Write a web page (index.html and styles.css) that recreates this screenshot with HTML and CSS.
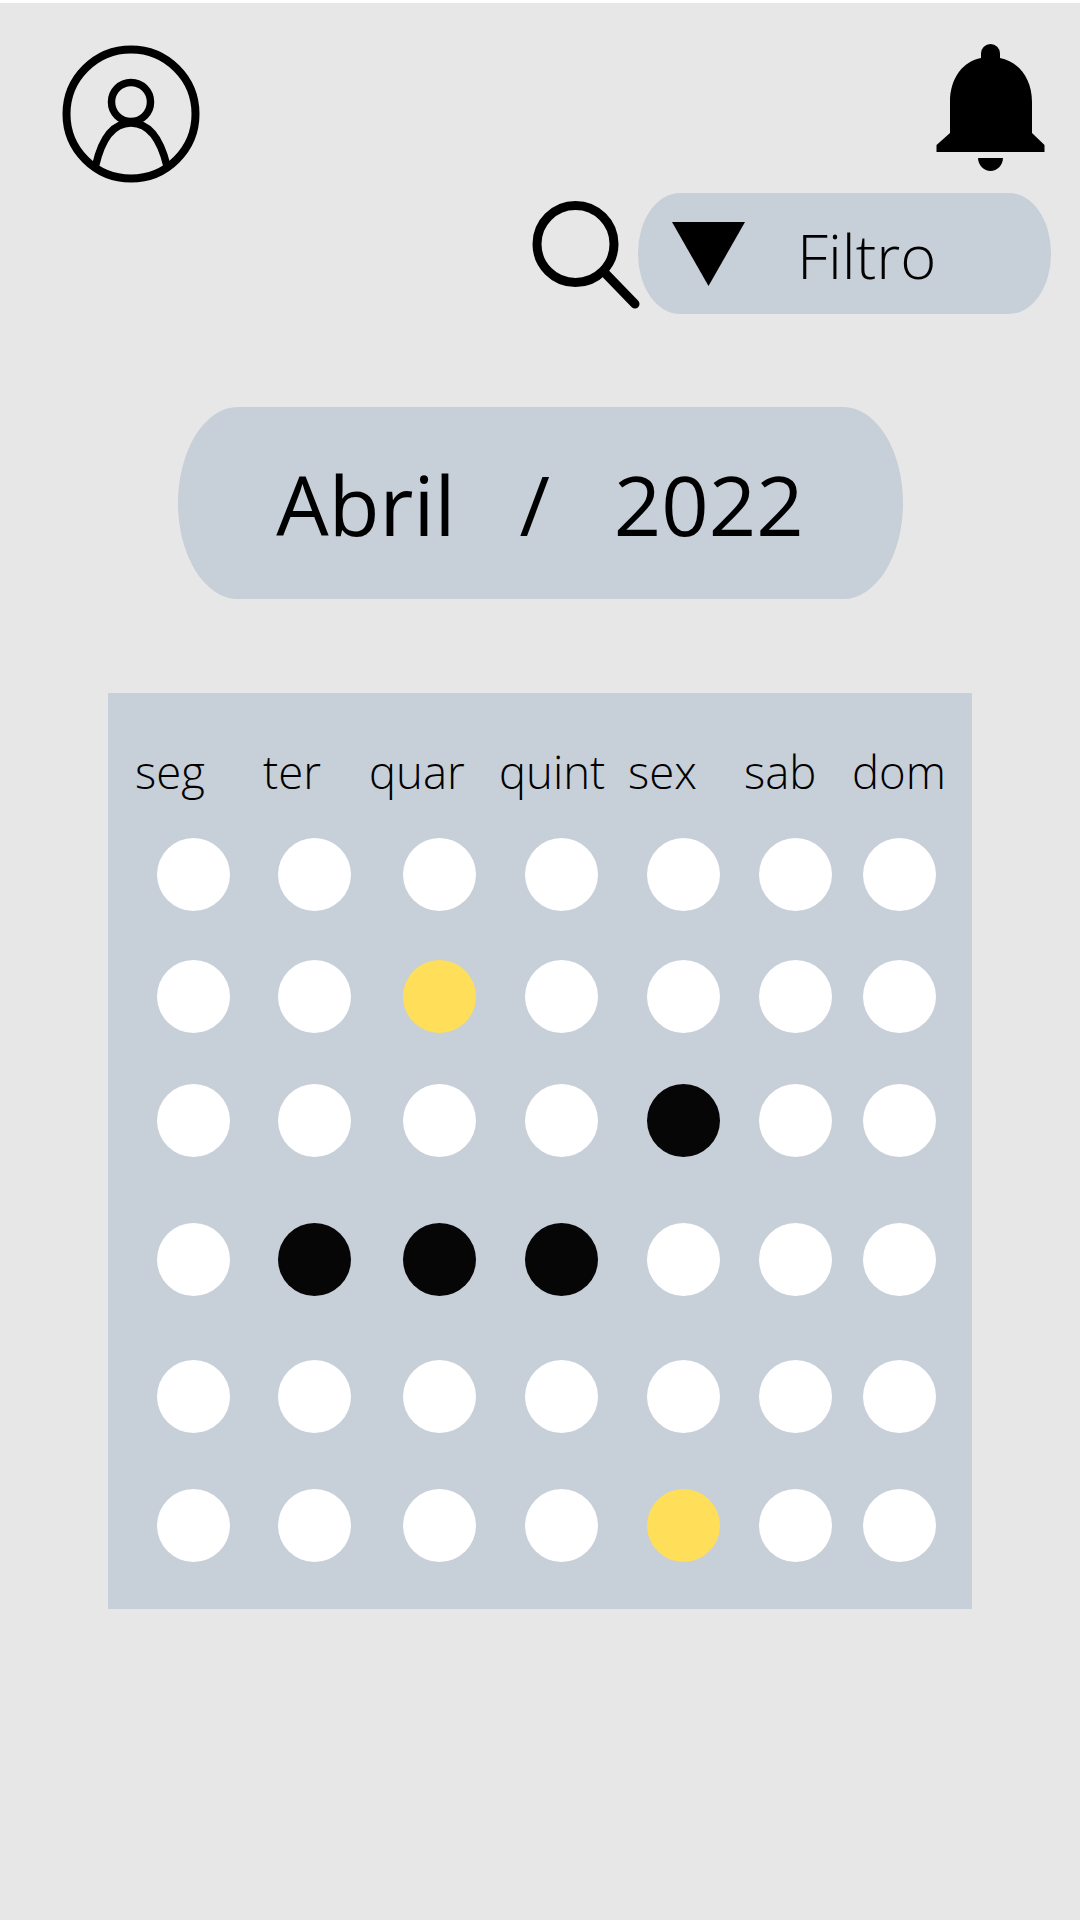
FILE: index.html
```html
<!DOCTYPE html>
<html>
<head>
    <meta charset="utf-8">
    <link rel="stylesheet" href="styles.css">
</head>
<body>
    <div class="top-bar">
        <svg class="avatar" viewBox="0 0 138 138">
            <circle cx="69" cy="69" r="64.5" fill="none" stroke="#000" stroke-width="8"/>
            <circle cx="69" cy="57" r="19.5" fill="none" stroke="#000" stroke-width="7.5"/>
            <path d="M33.5 121 C40 92 52 78 69 78 C86 78 98 92 105 121" fill="none" stroke="#000" stroke-width="7.5"/>
        </svg>
        <svg class="bell" viewBox="0 0 109 127">
            <path d="M45 14 V9.5 a9.5 9.5 0 0 1 19 0 V14 C81 17 96 33 96 58 V89 L108.5 101 V108 H0.5 V101 L14 89 V58 C14 33 28 17 45 14 Z"/>
            <path d="M42 114 H67 C67 121 61 127 54.5 127 C48 127 42 121 42 114 Z"/>
        </svg>
    </div>

    <div class="filter-row">
        <svg class="search" viewBox="0 0 108 108">
            <circle cx="45.5" cy="44" r="38.5" fill="none" stroke="#000" stroke-width="9"/>
            <line x1="74" y1="72" x2="105" y2="104" stroke="#000" stroke-width="9" stroke-linecap="round"/>
        </svg>
        <div class="filter">
            <svg class="arrow" viewBox="0 0 73 64"><polygon points="0,0 73,0 36.5,64"/></svg>
            <span class="filter-text">Filtro</span>
        </div>
    </div>

    <div class="month">
        <span>Abril</span>
        <span>/</span>
        <span>2022</span>
    </div>

    <div class="calendar">
        <div class="weekdays">
            <span>seg</span>
            <span>ter</span>
            <span>quar</span>
            <span>quint</span>
            <span>sex</span>
            <span>sab</span>
            <span>dom</span>
        </div>
        <div class="days">
            <div class="day"></div><div class="day"></div><div class="day"></div><div class="day"></div><div class="day"></div><div class="day"></div><div class="day"></div>
            <div class="day"></div><div class="day"></div><div class="day yellow"></div><div class="day"></div><div class="day"></div><div class="day"></div><div class="day"></div>
            <div class="day"></div><div class="day"></div><div class="day"></div><div class="day"></div><div class="day black"></div><div class="day"></div><div class="day"></div>
            <div class="day"></div><div class="day black"></div><div class="day black"></div><div class="day black"></div><div class="day"></div><div class="day"></div><div class="day"></div>
            <div class="day"></div><div class="day"></div><div class="day"></div><div class="day"></div><div class="day"></div><div class="day"></div><div class="day"></div>
            <div class="day"></div><div class="day"></div><div class="day"></div><div class="day"></div><div class="day yellow"></div><div class="day"></div><div class="day"></div>
        </div>
    </div>
</body>
</html>
```

FILE: styles.css
```css
* {
    box-sizing: border-box;
}

html, body {
    height: 100%;
}

body {
    margin: 0;
    border-top: 3px solid #fff;
    background: #e7e7e7;
    font-family: "Open Sans", sans-serif;
    color: #000;
}

.top-bar {
    display: flex;
    justify-content: space-between;
    align-items: flex-start;
    height: 190px;
    padding: 41px 35px 0 62px;
}

.avatar {
    width: 138px;
    height: 138px;
    margin-top: 1px;
}

.bell {
    width: 109px;
    height: 127px;
}

.filter-row {
    display: flex;
    justify-content: flex-end;
    padding-right: 29px;
}

.search {
    width: 108px;
    height: 108px;
    margin-top: 7px;
    overflow: visible;
}

.filter {
    display: flex;
    align-items: center;
    width: 413px;
    height: 121px;
    padding-left: 34px;
    background: #c7cfd9;
    border-radius: 42px / 60px;
}

.arrow {
    width: 73px;
    height: 64px;
}

.filter-text {
    margin-left: 52px;
    padding-top: 4px;
    font-size: 61.5px;
    font-weight: 300;
    line-height: 1;
}

.month {
    display: flex;
    justify-content: center;
    align-items: center;
    gap: 64px;
    width: 725px;
    height: 192px;
    margin: 93px auto 0;
    background: #c7cfd9;
    border-radius: 60px / 96px;
    font-size: 83px;
    line-height: 1;
}

.calendar {
    width: 864px;
    height: 916px;
    margin: 94px auto 0;
    padding-top: 48px;
    background: #c7cfd9;
}

.weekdays {
    display: grid;
    grid-template-columns: 128px 106px 130px 129px 116px 108px auto;
    padding-left: 27px;
    font-size: 45.5px;
    font-weight: 300;
    line-height: 60px;
}

.days {
    display: grid;
    grid-template-columns: 121px 125px 122px 122px 112px 104px 73px;
    grid-template-rows: 122px 124px 138.5px 137.5px 129px 73px;
    margin-top: 37px;
    padding-left: 49px;
}

.day {
    width: 73px;
    height: 73px;
    background: #fff;
    border-radius: 50%;
}

.yellow {
    background: #ffde59;
}

.black {
    background: #060606;
}
```
